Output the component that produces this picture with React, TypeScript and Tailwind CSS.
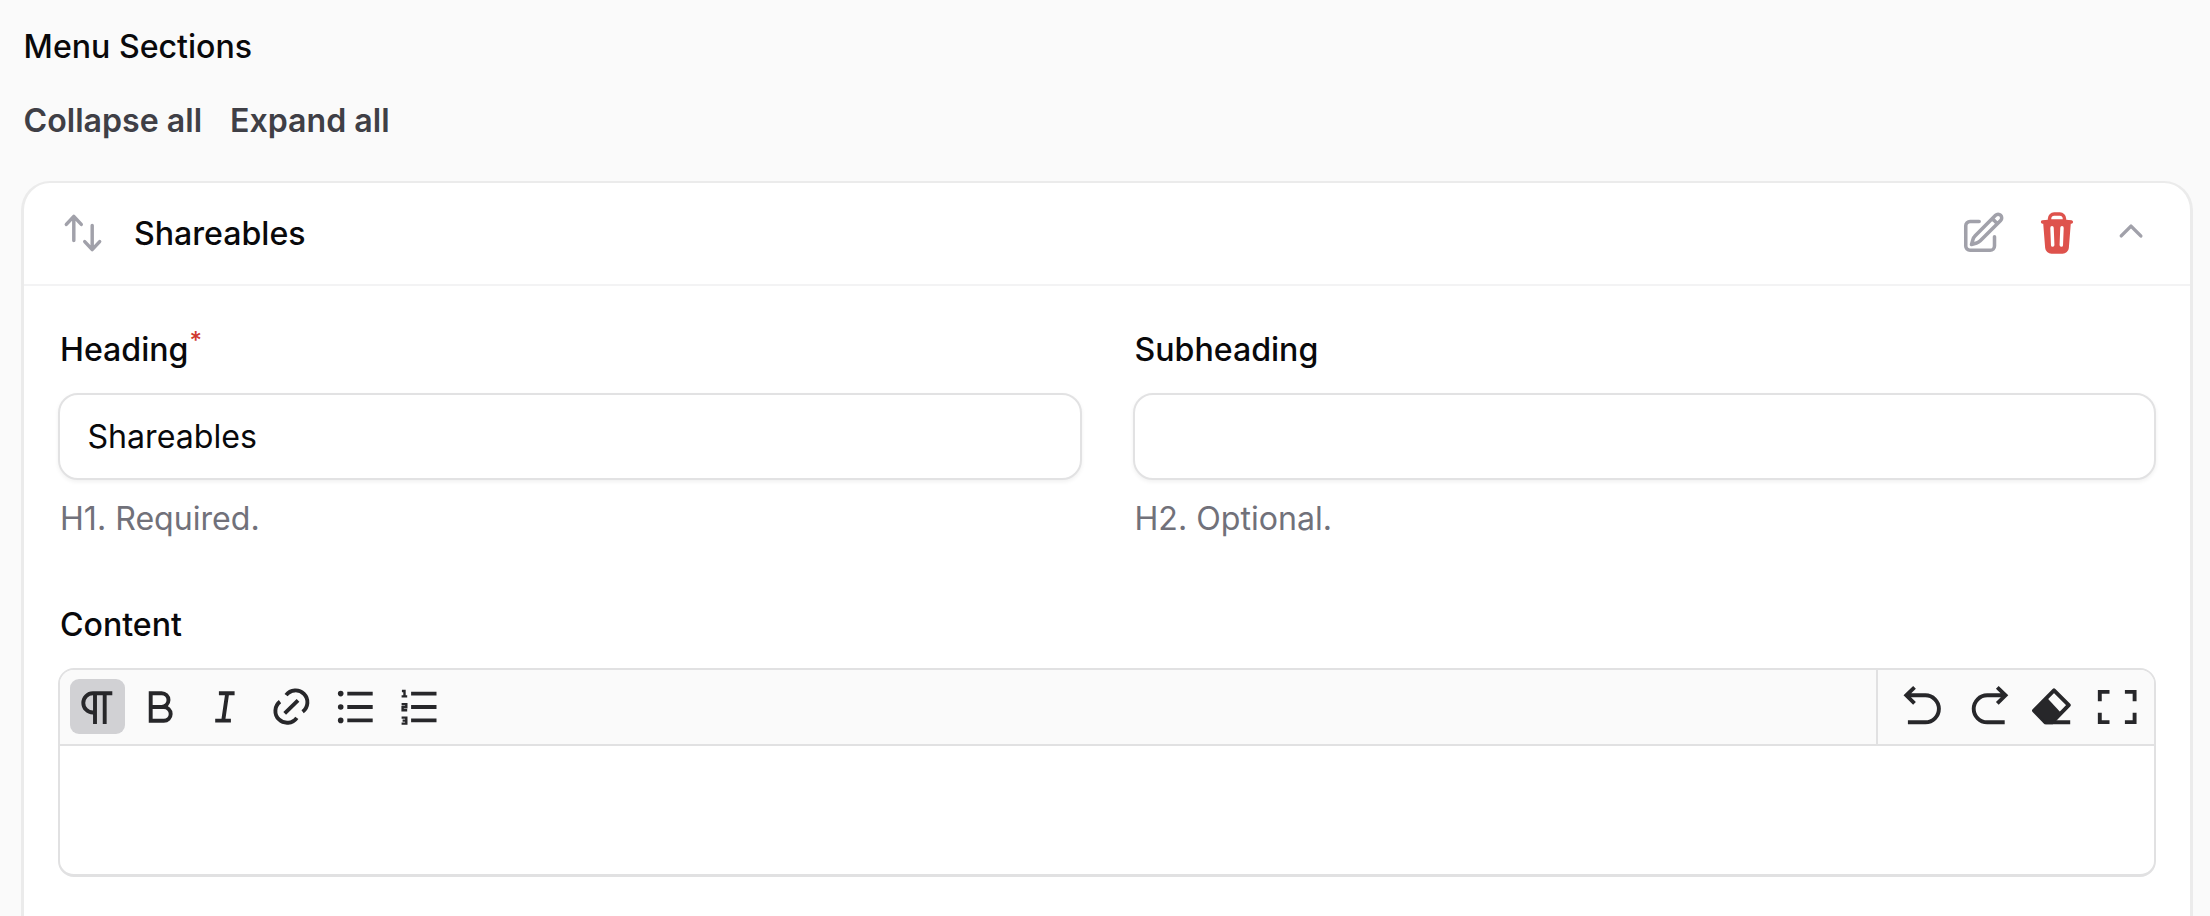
import type { ReactNode } from "react"
import { HiMiniArrowsUpDown, HiMiniChevronUp, HiMiniTrash, HiOutlinePencilSquare } from "react-icons/hi2"

type Tool = {
  label: string
  active?: boolean
  icon: ReactNode
}

const formatTools: Tool[] = [
  {
    label: "Paragraph",
    active: true,
    icon: <path d="M42.3 14.3H22.9a9.6 9.6 0 0 0 0 19.2H25M25 14.3V45M34.7 14.3V45" />,
  },
  {
    label: "Bold",
    icon: <path d="M16.7 14.2H27.6a6.9 6.9 0 0 1 0 13.8H16.7H29.8a6.9 6.9 0 0 1 0 13.8H16.7Z" />,
  },
  {
    label: "Italic",
    icon: <path d="M20.9 14.2H36.6M17.2 41.6H32.9M29.2 14.2L25.2 41.6" />,
  },
  {
    label: "Link",
    icon: (
      <path d="M23.1 16.2A11.8 11.8 0 1 1 39.6 32.7M17 22.6A11.8 11.8 0 1 0 33.8 38.8M21.7 34.3L35 21.3" />
    ),
  },
  {
    label: "Bullet list",
    icon: (
      <>
        <path d="M20.3 14.6H45.7M20.3 28H45.7M20.3 41.4H45.7" />
        <g fill="currentColor" stroke="none">
          <circle cx="13.7" cy="14.6" r="2.8" />
          <circle cx="13.7" cy="28" r="2.8" />
          <circle cx="13.7" cy="41.4" r="2.8" />
        </g>
      </>
    ),
  },
  {
    label: "Ordered list",
    icon: (
      <>
        <path d="M20.1 14.6H45.5M20.1 28H45.5M20.1 41.4H45.5" />
        <path
          strokeWidth="2.4"
          d="M10.9 12h2.6v5.4M10.6 17.4h5.6M10.6 25.2h4.7v3h-3.7v3h4.6M10.6 38.6h4.7v6h-4.7M11.6 41.6h3.6"
        />
      </>
    ),
  },
]

const historyTools: Tool[] = [
  {
    label: "Undo",
    icon: <path d="M17.5 8.3L9.3 16.3L17.5 24.3M9.3 16.3H28.4a13.5 13.5 0 0 1 0 27H10.9" />,
  },
  {
    label: "Redo",
    icon: <path d="M36.3 8.3L44.5 16.3L36.3 24.3M44.5 16.3H26.2a13.5 13.5 0 0 0 0 27H43.7" />,
  },
  {
    label: "Clear",
    icon: (
      <>
        <path strokeLinejoin="round" d="M29 11.3L43.8 26.1L27 43.3H20.4L9 31.6Z" />
        <path fill="currentColor" stroke="none" d="M22 18.8L35.2 33L27 43.3H20.4L9 31.6Z" />
        <path d="M20.4 43.3H45.2" />
      </>
    ),
  },
  {
    label: "Fullscreen",
    icon: <path d="M9.8 22.3V12.9H19.5M34.9 12.9H44.6V22.3M44.6 33.7V43.1H34.9M19.5 43.1H9.8V33.7" />,
  },
]

function ToolButton({ label, active, icon }: Tool) {
  return (
    <button
      type="button"
      aria-label={label}
      className={`size-[55px] shrink-0 rounded-[9px] text-[#27272a] ${active ? "bg-[#d1d1d4]" : ""}`}
    >
      <svg viewBox="0 0 55 55" className="size-full" fill="none" stroke="currentColor" strokeWidth="3.9">
        {icon}
      </svg>
    </button>
  )
}

function Field({ label, value, helper, required }: { label: string; value: string; helper: string; required?: boolean }) {
  return (
    <div className="flex flex-col">
      <label className="h-12 pl-0.5 leading-[48px] font-medium">
        {label}
        {required && <sup className="top-[-0.5em] ml-[1px] text-[24px] leading-none text-[#d0392f]">*</sup>}
      </label>
      <div className="mt-[19px] flex h-[87px] items-center rounded-[20px] border-2 border-[#e2e2e3] bg-white px-[27.5px] pt-[2px] shadow-[0_2px_4px_rgba(0,0,0,0.06)]">
        {value}
      </div>
      <p className="mt-[15px] pl-0.5 leading-[48px] text-[#71717a]">{helper}</p>
    </div>
  )
}

export default function App() {
  return (
    <main className="flex h-[916px] w-[2210px] flex-col overflow-hidden bg-[#fafafa] pt-[23px] pr-[13px] pl-[17px] font-['Inter',sans-serif] text-[32.12px] text-[#09090b]">
      <h2 className="pl-[6.6px] leading-[48px] font-medium">Menu Sections</h2>
      <div className="mt-[26px] flex gap-7 pl-[6.6px] leading-[48px] font-semibold text-[#3f3f46]">
        <button type="button">Collapse all</button>
        <button type="button">Expand all</button>
      </div>

      <section className="mx-1 mt-9 flex flex-1 flex-col rounded-t-[29px] border-x-[3px] border-t-2 border-[#ebebeb] bg-white">
        <header className="flex h-[103px] shrink-0 items-center border-b-2 border-[#f3f3f4] px-9 text-[#a1a1aa]">
          <HiMiniArrowsUpDown className="mb-[1px] size-[46px]" />
          <h3 className="ml-[28px] flex-1 pt-[2px] font-medium text-[#09090b]">Shareables</h3>
          <div className="mb-[2px] flex gap-7">
            <HiOutlinePencilSquare className="size-[46px] [stroke-width:1.85]" />
            <HiMiniTrash className="size-[46px] text-[#de524c]" />
            <HiMiniChevronUp className="size-[46px]" />
          </div>
        </header>

        <div className="px-[34px] pt-10">
          <div className="grid grid-cols-2 gap-[51px]">
            <Field label="Heading" value="Shareables" helper="H1. Required." required />
            <Field label="Subheading" value="" helper="H2. Optional." />
          </div>

          <label className="mt-[58px] block pl-0.5 leading-[48px] font-medium">Content</label>
          <div className="mt-[19px] flex h-[209px] flex-col overflow-hidden rounded-[16px] border-2 border-b-[3px] border-[#e1e1e2] bg-white">
            <div className="flex h-[76px] shrink-0 border-b-2 border-[#e1e1e2] bg-[#fafafa]">
              <div className="flex flex-1 items-start gap-[9.2px] pt-[9px] pl-2.5">
                {formatTools.map((tool) => (
                  <ToolButton key={tool.label} {...tool} />
                ))}
              </div>
              <div className="flex items-start gap-[9.2px] border-l-2 border-[#e1e1e2] pt-[9px] pr-[9.5px] pl-[19px]">
                {historyTools.map((tool) => (
                  <ToolButton key={tool.label} {...tool} />
                ))}
              </div>
            </div>
          </div>
        </div>
      </section>
    </main>
  )
}
